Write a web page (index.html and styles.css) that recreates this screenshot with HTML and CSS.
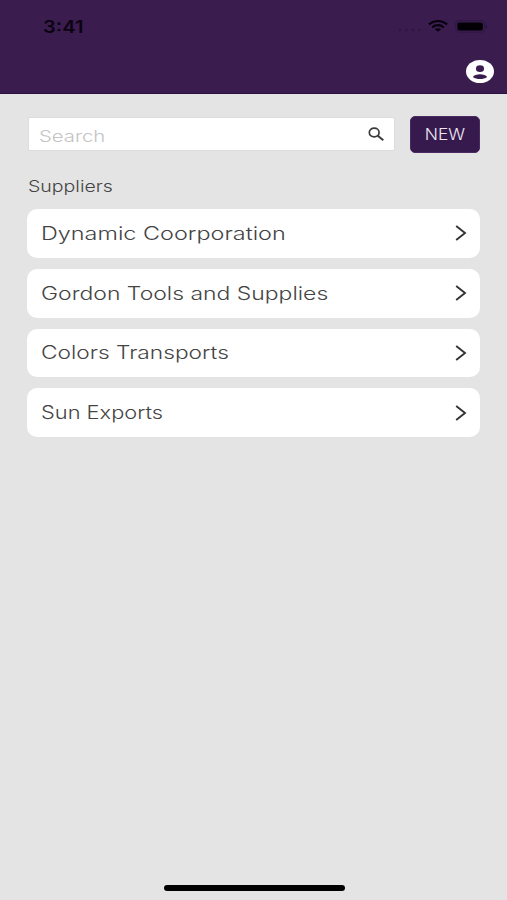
FILE: index.html
```html
<!DOCTYPE html>
<html lang="en">
<head>
<meta charset="utf-8">
<title>Suppliers</title>
<link rel="stylesheet" href="styles.css">
</head>
<body>
<div class="screen">
  <header class="header">
    <div class="status">
      <span class="time wide">3:41</span>
      <div class="indicators">
        <svg class="signal" width="24" height="4" viewBox="0 0 24 4"><g fill="#2c1540"><circle cx="2" cy="2" r="1.2"/><circle cx="8.500" cy="2" r="1.200"/><circle cx="15" cy="2" r="1.200"/><circle cx="21.500" cy="2" r="1.200"/></g></svg>
        <svg class="wifi" width="20" height="12" viewBox="0 0 20 12"><g fill="none" stroke="#08020f" stroke-width="2.100"><path d="M.8 4.300Q10-2.300 19.200 4.300"/><path d="M4.200 7.300Q10 3 15.800 7.300"/></g><path d="M6.800 9.200Q10 7.200 13.200 9.200L10 11.800Z" fill="#08020f"/></svg>
        <svg class="battery" width="33" height="13" viewBox="0 0 33 13"><rect x=".7" y=".7" width="29" height="11.400" rx="3.500" fill="none" stroke="#2f1745" stroke-width="1.200"/><rect x="2.400" y="2.400" width="25.400" height="8" rx="2" fill="#020005"/><path d="M31 4.200q2 2.200 0 4.400z" fill="#25113a"/></svg>
      </div>
    </div>
    <svg class="account" width="28" height="23" viewBox="2 2 20 20" preserveAspectRatio="none"><circle cx="12" cy="12" r="10" fill="#fff"/><circle cx="12" cy="9.500" r="2.900" fill="#3a1d4e"/><path d="M6.900 16.700C8.300 13.700 15.700 13.700 17.100 16.700C14.500 19.200 9.500 19.200 6.900 16.700Z" fill="#3a1d4e"/></svg>
  </header>
  <main class="content">
    <div class="toolbar">
      <div class="search">
        <span class="placeholder wide">Search</span>
        <svg class="lens" width="17" height="15" viewBox="0 0 17 15"><g fill="none" stroke="#3b3b3b" stroke-width="1.700"><ellipse cx="6.200" cy="5.500" rx="4.900" ry="4.300"/><path d="M9.800 8.700L15.300 13.300" stroke-width="2"/></g></svg>
      </div>
      <button class="new"><span class="wide">NEW</span></button>
    </div>
    <h1 class="title"><span class="wide">Suppliers</span></h1>
    <ul class="list">
      <li class="item"><span class="wide dynamic">Dynamic Coorporation</span><svg class="chevron" width="12" height="16" viewBox="0 0 12 16"><path d="M1.200 1L10 8L1.200 15"/></svg></li>
      <li class="item"><span class="wide gordon">Gordon Tools and Supplies</span><svg class="chevron" width="12" height="16" viewBox="0 0 12 16"><path d="M1.200 1L10 8L1.200 15"/></svg></li>
      <li class="item"><span class="wide colors">Colors Transports</span><svg class="chevron" width="12" height="16" viewBox="0 0 12 16"><path d="M1.200 1L10 8L1.200 15"/></svg></li>
      <li class="item"><span class="wide sun">Sun Exports</span><svg class="chevron" width="12" height="16" viewBox="0 0 12 16"><path d="M1.200 1L10 8L1.200 15"/></svg></li>
    </ul>
  </main>
  <div class="home"></div>
</div>
</body>
</html>
```

FILE: styles.css
```css
* { box-sizing: border-box; }
body { margin: 0; font-family: Inter, "Liberation Sans", sans-serif; color: #444; }
.screen { height: 900px; display: flex; flex-direction: column; background: #e4e4e4; }
.wide { display: inline-block; transform: scaleX(1.3); transform-origin: left center; white-space: nowrap; }
.header { height: 94px; background: #3a1d4e; border-bottom: 1px solid #2b0f40; display: flex; flex-direction: column; }
.status { display: flex; justify-content: space-between; height: 52px; padding: 0 19px 0 43px; align-items: center; }
.time { font-size: 17px; font-weight: 600; color: #0b0312; transform: scaleX(1.18); padding-top: 1px; }
.indicators { display: flex; align-items: center; }
.signal { margin: 7px 6px 0 0; }
.wifi { margin-right: 7px; }
.account { align-self: flex-end; margin: 8px 13px 0 0; }
.content { flex: 1; padding: 22px 27px 0 28px; }
.toolbar { display: flex; align-items: flex-start; justify-content: space-between; }
.search { width: 367px; height: 34px; margin-top: 1px; background: #fff; border: 1px solid #dcdcdc; border-radius: 2px; display: flex; align-items: center; justify-content: space-between; padding: 0 9px 0 10px; }
.placeholder { font-size: 16px; font-weight: 300; color: #c4c4c4; padding-top: 4px; transform: scaleX(1.27); }
.new { width: 70px; height: 37px; border: 1px solid #4b2a64; border-radius: 5px; background: #371a4d; color: #eee6f2; font: 300 15.500px Inter, sans-serif; padding: 0; }
.new .wide { transform: scaleX(1.12); transform-origin: center; }
.title { margin: 23px 0 0; height: 20px; font-size: 16px; line-height: 20px; font-weight: 300; }
.title .wide { transform: scaleX(1.22); }
.list { list-style: none; margin: 13px 0 0 -1px; padding: 0; display: flex; flex-direction: column; gap: 11px; }
.item { height: 48.800px; background: #fff; border-radius: 10px; display: flex; align-items: center; justify-content: space-between; padding: 0 13px 0 14px; font-size: 18px; font-weight: 300; }
.gordon { transform: scaleX(1.274); }
.colors { transform: scaleX(1.262); }
.sun { transform: scaleX(1.212); }
.chevron { fill: none; stroke: #333; stroke-width: 1.900; }
.home { width: 181px; height: 6px; border-radius: 3px; background: #000; margin: 0 162px 9px 164px; }
```
